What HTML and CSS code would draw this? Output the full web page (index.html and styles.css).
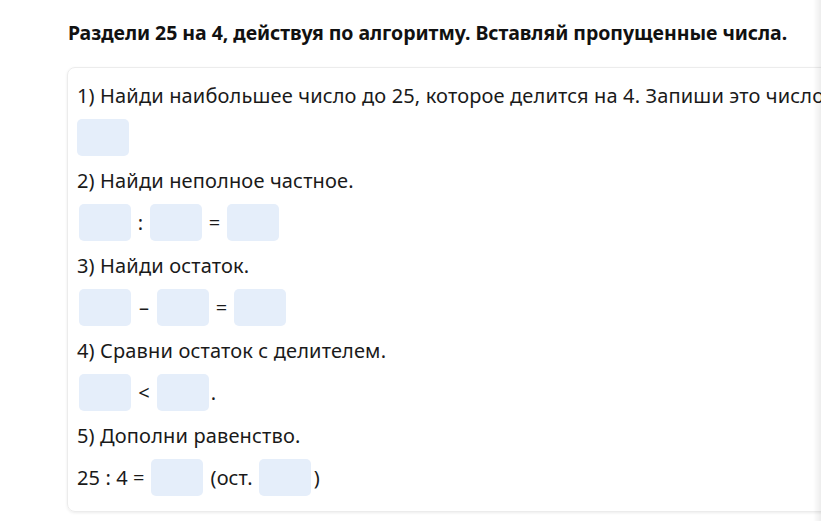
FILE: index.html
```html
<!DOCTYPE html>
<html lang="ru">
<head>
<meta charset="utf-8">
<link rel="stylesheet" href="styles.css">
</head>
<body>
<div class="page">
  <h1 class="title">Раздели 25 на 4, действуя по алгоритму. Вставляй пропущенные числа.</h1>
  <div class="card">
    <p class="step">1) Найди наибольшее число до 25, которое делится на 4. Запиши это число.</p>
    <div class="row row-first"><span class="box"></span></div>

    <p class="step">2) Найди неполное частное.</p>
    <div class="row"><span class="box"></span><span class="op op-colon">:</span><span class="box"></span><span class="op op-eq">=</span><span class="box"></span></div>

    <p class="step">3) Найди остаток.</p>
    <div class="row"><span class="box"></span><span class="op op-minus">–</span><span class="box"></span><span class="op op-eq">=</span><span class="box"></span></div>

    <p class="step">4) Сравни остаток с делителем.</p>
    <div class="row"><span class="box"></span><span class="op op-lt">&lt;</span><span class="box"></span><span class="op op-dot">.</span></div>

    <p class="step">5) Дополни равенство.</p>
    <div class="row row-last"><span class="txt txt-eq">25 : 4 =</span><span class="box"></span><span class="txt txt-ost">(ост.</span><span class="box"></span><span class="txt txt-close">)</span></div>
  </div>
</div>
<div class="edge-shadow"></div>
</body>
</html>
```

FILE: styles.css
```css
html, body {
  margin: 0;
  padding: 0;
  background: #ffffff;
  overflow: hidden;
  width: 821px;
  height: 521px;
}

body {
  font-family: "Noto Sans", "Open Sans", sans-serif;
  color: #1a1a1a;
}

.page {
  padding: 20px 0 0 67px;
  width: 900px;
}

.title {
  margin: 0 0 0 1px;
  font-size: 19.5px;
  line-height: 26px;
  font-weight: 700;
  letter-spacing: -0.05px;
  color: #111;
  white-space: nowrap;
}

.card {
  margin-top: 21px;
  width: 820px;
  border: 1px solid #ececec;
  border-radius: 8px;
  box-shadow: 0 1px 3px rgba(0, 0, 0, 0.08);
  padding: 16px 0 15px 9px;
  box-sizing: border-box;
}

.step {
  margin: 0;
  font-size: 20px;
  line-height: 24px;
  white-space: nowrap;
  letter-spacing: 0.15px;
}

.row {
  display: flex;
  align-items: center;
  height: 37px;
  margin: 11px 0 13px 2px;
  font-size: 20px;
}

.row-first {
  margin-left: 0;
}

.row-last {
  margin-left: 0;
  margin-bottom: 0;
}

.box {
  display: block;
  width: 52px;
  height: 37px;
  border-radius: 5px;
  background: #e5eefa;
  flex: none;
}

.op {
  display: block;
  text-align: center;
  line-height: 37px;
}

.op-colon { width: 19px; }
.op-eq { width: 25px; }
.op-minus { width: 26px; }
.op-lt { width: 26px; }
.op-dot { width: 9px; }

.txt {
  line-height: 37px;
  white-space: nowrap;
  letter-spacing: 0.1px;
}

.txt-eq { margin-right: 6px; }
.txt-ost { margin: 0 6px 0 8px; }
.txt-close { margin-left: 3px; }

.edge-shadow {
  position: fixed;
  top: 0;
  right: 0;
  width: 8px;
  height: 100%;
  background: linear-gradient(to right, rgba(0, 0, 0, 0), rgba(0, 0, 0, 0.07));
}
```
